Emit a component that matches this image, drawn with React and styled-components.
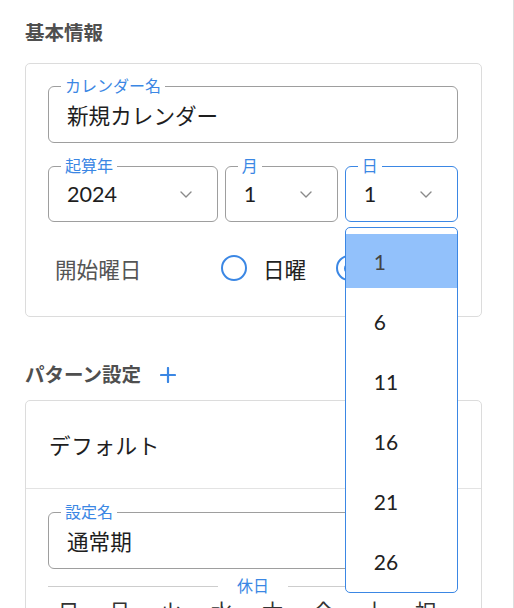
import React from 'react';
import styled, { createGlobalStyle } from 'styled-components';

const blue = '#3b87e4';

const GlobalStyle = createGlobalStyle`
  html, body {
    margin: 0;
    padding: 0;
    overflow: hidden;
    background: #fff;
  }
  body {
    font-family: "Lato", "Noto Sans CJK JP", sans-serif;
    color: #222;
  }
`;

const days = ['日', '月', '火', '水', '木', '金', '土', '祝'];
const dayOptions = [1, 6, 11, 16, 21, 26];

const Chevron = () =>
  <svg width="12" height="7" viewBox="0 0 12 7" fill="none">
    <path d="M1 1l5 5 5-5" stroke="#8a8a8a" strokeWidth="1.4" strokeLinecap="round" strokeLinejoin="round" />
  </svg>

const PlusIcon = () =>
  <svg width="16" height="16" viewBox="0 0 16 16" fill="none">
    <path d="M8 1v14M1 8h14" stroke={blue} strokeWidth="2.2" strokeLinecap="round" />
  </svg>

const OutlinedField = ({ label, value, select, focused, children }) =>
  <FieldBox focused={focused} select={select}>
    <FieldLabel>{ label }</FieldLabel>
    <FieldValue>{ value }</FieldValue>
    { select && <Chevron /> }
    { children }
  </FieldBox>

const Radio = ({ label, checked }) =>
  <RadioOption>
    <RadioCircle checked={checked} />
    <span>{ label }</span>
  </RadioOption>

const App = () =>
  <>
    <GlobalStyle />
    <Page>
      <SectionTitle>基本情報</SectionTitle>
      <BasicCard>
        <OutlinedField label="カレンダー名" value="新規カレンダー" />
        <SelectRow>
          <OutlinedField label="起算年" value="2024" select />
          <OutlinedField label="月" value="1" select />
          <OutlinedField label="日" value="1" select focused>
            <Menu>
              {dayOptions.map(d =>
                <MenuItem key={d} active={d === 1}>{ d }</MenuItem>
              )}
            </Menu>
          </OutlinedField>
        </SelectRow>
        <RadioRow>
          <RadioLabel>開始曜日</RadioLabel>
          <RadioGroup>
            <Radio label="日曜" />
            <Radio label="月曜" checked />
          </RadioGroup>
        </RadioRow>
      </BasicCard>

      <SectionTitle second>
        パターン設定
        <PlusIcon />
      </SectionTitle>
      <Card>
        <PatternHeader>デフォルト</PatternHeader>
        <PatternBody>
          <OutlinedField label="設定名" value="通常期" />
          <Divider>
            <DividerLine />
            <DividerLabel>休日</DividerLabel>
            <DividerLine />
          </Divider>
          <DayGrid>
            {days.map(d =>
              <DayCell key={d}>
                <span>{ d }</span>
                <DayCheck />
              </DayCell>
            )}
          </DayGrid>
        </PatternBody>
      </Card>
    </Page>
  </>

const Page = styled.div`
  width: 514px;
  height: 608px;
  box-sizing: border-box;
  border-right: 1px solid #dedede;
  padding: 19px 32px 0 25px;
  overflow: hidden;
`;

const SectionTitle = styled.h2`
  display: flex;
  align-items: center;
  gap: 19px;
  margin: ${p => p.second ? '44px 0 11px' : '0 0 16px'};
  font-size: 19.5px;
  font-weight: 700;
  line-height: 28px;
  color: #4f4f4f;
`;

const Card = styled.div`
  width: 457px;
  box-sizing: border-box;
  border: 1px solid #dcdcdc;
  border-radius: 5px;
  background: #fff;
`;

const BasicCard = styled(Card)`
  padding: 22px 23px 28px 22px;
`;

const FieldBox = styled.div`
  position: relative;
  display: flex;
  align-items: center;
  height: ${p => p.select ? '56px' : '57px'};
  box-sizing: border-box;
  padding: 0 ${p => p.select ? '25px' : '18px'} 0 18px;
  border: 1px solid ${p => p.focused ? blue : '#9e9e9e'};
  border-radius: 6px;
  font-size: 21.6px;
  color: #1e1e1e;
`;

const FieldLabel = styled.span`
  position: absolute;
  top: -9px;
  left: 12px;
  padding: 0 4px;
  background: #fff;
  font-size: 16px;
  line-height: 16px;
  color: ${blue};
`;

const FieldValue = styled.span`
  flex: 1;
  white-space: nowrap;
`;

const SelectRow = styled.div`
  display: grid;
  grid-template-columns: 1.5fr 1fr 1fr;
  gap: 7px;
  margin-top: 23px;
`;

const Menu = styled.ul`
  position: absolute;
  top: calc(100% + 6px);
  left: -1px;
  right: -1px;
  z-index: 10;
  margin: 0;
  padding: 6px 0 4px;
  list-style: none;
  background: #fff;
  border: 1px solid ${blue};
  border-radius: 5px;
`;

const MenuItem = styled.li`
  display: flex;
  align-items: center;
  height: 54px;
  margin-bottom: 6px;
  padding-left: 28px;
  font-size: 21px;
  color: ${p => p.active ? '#444' : '#222'};
  background: ${p => p.active ? '#92c1fb' : 'transparent'};

  &:last-child {
    margin-bottom: 0;
  }
`;

const RadioRow = styled.div`
  display: flex;
  align-items: center;
  height: 40px;
  margin-top: 26px;
  padding-left: 7px;
  font-size: 21.6px;
`;

const RadioLabel = styled.span`
  width: 166px;
  color: #555;
`;

const RadioGroup = styled.div`
  display: flex;
  gap: 30px;
`;

const RadioOption = styled.label`
  display: flex;
  align-items: center;
  gap: 16px;
  color: #222;
`;

const RadioCircle = styled.span`
  display: flex;
  align-items: center;
  justify-content: center;
  width: 26px;
  height: 26px;
  box-sizing: border-box;
  border: 2.5px solid ${blue};
  border-radius: 50%;

  &::after {
    content: "";
    display: ${p => p.checked ? 'block' : 'none'};
    width: 11px;
    height: 11px;
    border-radius: 50%;
    background: ${blue};
  }
`;

const PatternHeader = styled.div`
  display: flex;
  align-items: center;
  height: 87px;
  padding-left: 23px;
  border-bottom: 1px solid #e3e3e3;
  font-size: 21.6px;
  letter-spacing: 0.6px;
  color: #1e1e1e;
`;

const PatternBody = styled.div`
  padding: 23px 23px 0 22px;
`;

const Divider = styled.div`
  display: flex;
  align-items: center;
  height: 16px;
  margin-top: 9px;
`;

const DividerLine = styled.div`
  flex: 1;
  height: 1px;
  background: #cdcdcd;
`;

const DividerLabel = styled.span`
  padding: 0 19px;
  font-size: 16px;
  line-height: 16px;
  color: ${blue};
`;

const DayGrid = styled.div`
  display: grid;
  grid-template-columns: repeat(8, 51px);
  margin: 3px 0 0 -5px;
`;

const DayCell = styled.div`
  display: flex;
  flex-direction: column;
  align-items: center;
  gap: 6px;
  font-size: 21.6px;
  line-height: 30px;
  color: #333;
`;

const DayCheck = styled.span`
  width: 20px;
  height: 20px;
  border: 2px solid #888;
  border-radius: 3px;
`;

export default App;
